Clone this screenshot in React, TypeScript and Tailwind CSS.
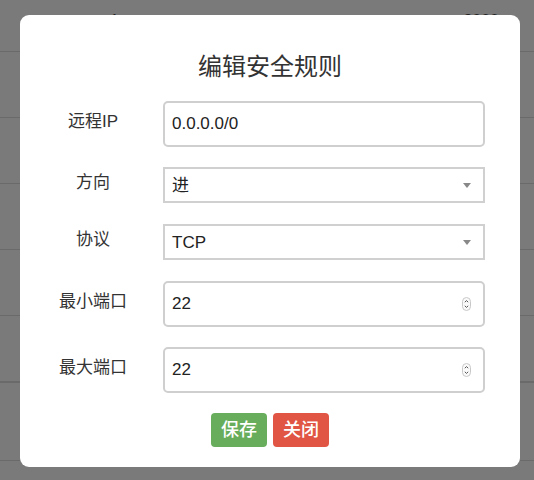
import React from "react";

const FONT = { fontFamily: '"Liberation Sans", "Noto Sans CJK SC", sans-serif' };

function Spinner() {
  return (
    <svg width="9" height="14" viewBox="0 0 9 14" className="shrink-0">
      <rect x="0.5" y="0.5" width="8" height="13" rx="4" fill="#fafafa" stroke="#c8c8c8" />
      <path d="M2.8 5.2 L4.5 3.6 L6.2 5.2" fill="none" stroke="#555" strokeWidth="1" />
      <path d="M2.8 8.8 L4.5 10.4 L6.2 8.8" fill="none" stroke="#555" strokeWidth="1" />
    </svg>
  );
}

function Caret() {
  return (
    <svg width="8" height="5" viewBox="0 0 8 5" className="shrink-0">
      <path d="M0 0 L8 0 L4 5 Z" fill="#888" />
    </svg>
  );
}

function Row({ label, children }: { label: string; children: React.ReactNode }) {
  return (
    <div className="flex items-center">
      <div className="w-[143px] pl-[3px] pb-[5px] text-center text-[17px] text-[#333]">{label}</div>
      <div className="w-[322px]">{children}</div>
    </div>
  );
}

function TextBox({ value, spin }: { value: string; spin?: boolean }) {
  return (
    <div className="flex h-[46px] items-center justify-between rounded-[5px] border-2 border-[#cfcfcf] bg-white pl-[7px] pr-[12px]">
      <span className="text-[17px] text-[#222]">{value}</span>
      {spin && <Spinner />}
    </div>
  );
}

function SelectBox({ value }: { value: string }) {
  return (
    <div className="h-[37px]">
      <div className="flex h-[36px] items-center justify-between border-2 border-[#d0d0d0] bg-white pl-[7px] pr-[12px]">
        <span className="pt-[2px] text-[17px] text-[#222]">{value}</span>
        <Caret />
      </div>
    </div>
  );
}

export default function App() {
  const rows = [52, 66, 66, 66, 66, 67, 78];
  return (
    <div className="relative h-[480px] w-[534px] overflow-hidden bg-[#7a7a7a]" style={FONT}>
      <div className="flex flex-col">
        {rows.map((h, i) => (
          <div
            key={i}
            className={`flex items-start justify-between border-b border-[#6a6a6a] px-[110px] ${i === 5 ? "border-b-2" : ""}`}
            style={{ height: h }}
          >
            {i === 0 && (
              <>
                <span className="mt-[9px] text-[16px] text-[#222]">1</span>
                <span className="-mr-[75px] mt-[9px] text-[16px] text-[#222]">2000</span>
              </>
            )}
          </div>
        ))}
      </div>

      <div className="absolute left-[20px] top-[15px] flex h-[452px] w-[500px] flex-col rounded-[9px] bg-white">
        <h2 className="pt-[36px] text-center text-[24px] leading-[32px] text-[#333]">编辑安全规则</h2>
        <div className="mt-[18px] flex flex-col gap-[20px]">
          <Row label="远程IP">
            <TextBox value="0.0.0.0/0" />
          </Row>
          <Row label="方向">
            <SelectBox value="进" />
          </Row>
          <Row label="协议">
            <SelectBox value="TCP" />
          </Row>
          <Row label="最小端口">
            <TextBox value="22" spin />
          </Row>
          <Row label="最大端口">
            <TextBox value="22" spin />
          </Row>
        </div>
        <div className="mt-[20px] flex justify-center gap-[6px]">
          <button className="h-[34px] w-[56px] rounded-[4px] bg-[#67ad5b] text-[18px] font-medium text-white">保存</button>
          <button className="h-[34px] w-[56px] rounded-[4px] bg-[#e05543] text-[18px] font-medium text-white">关闭</button>
        </div>
      </div>
    </div>
  );
}
